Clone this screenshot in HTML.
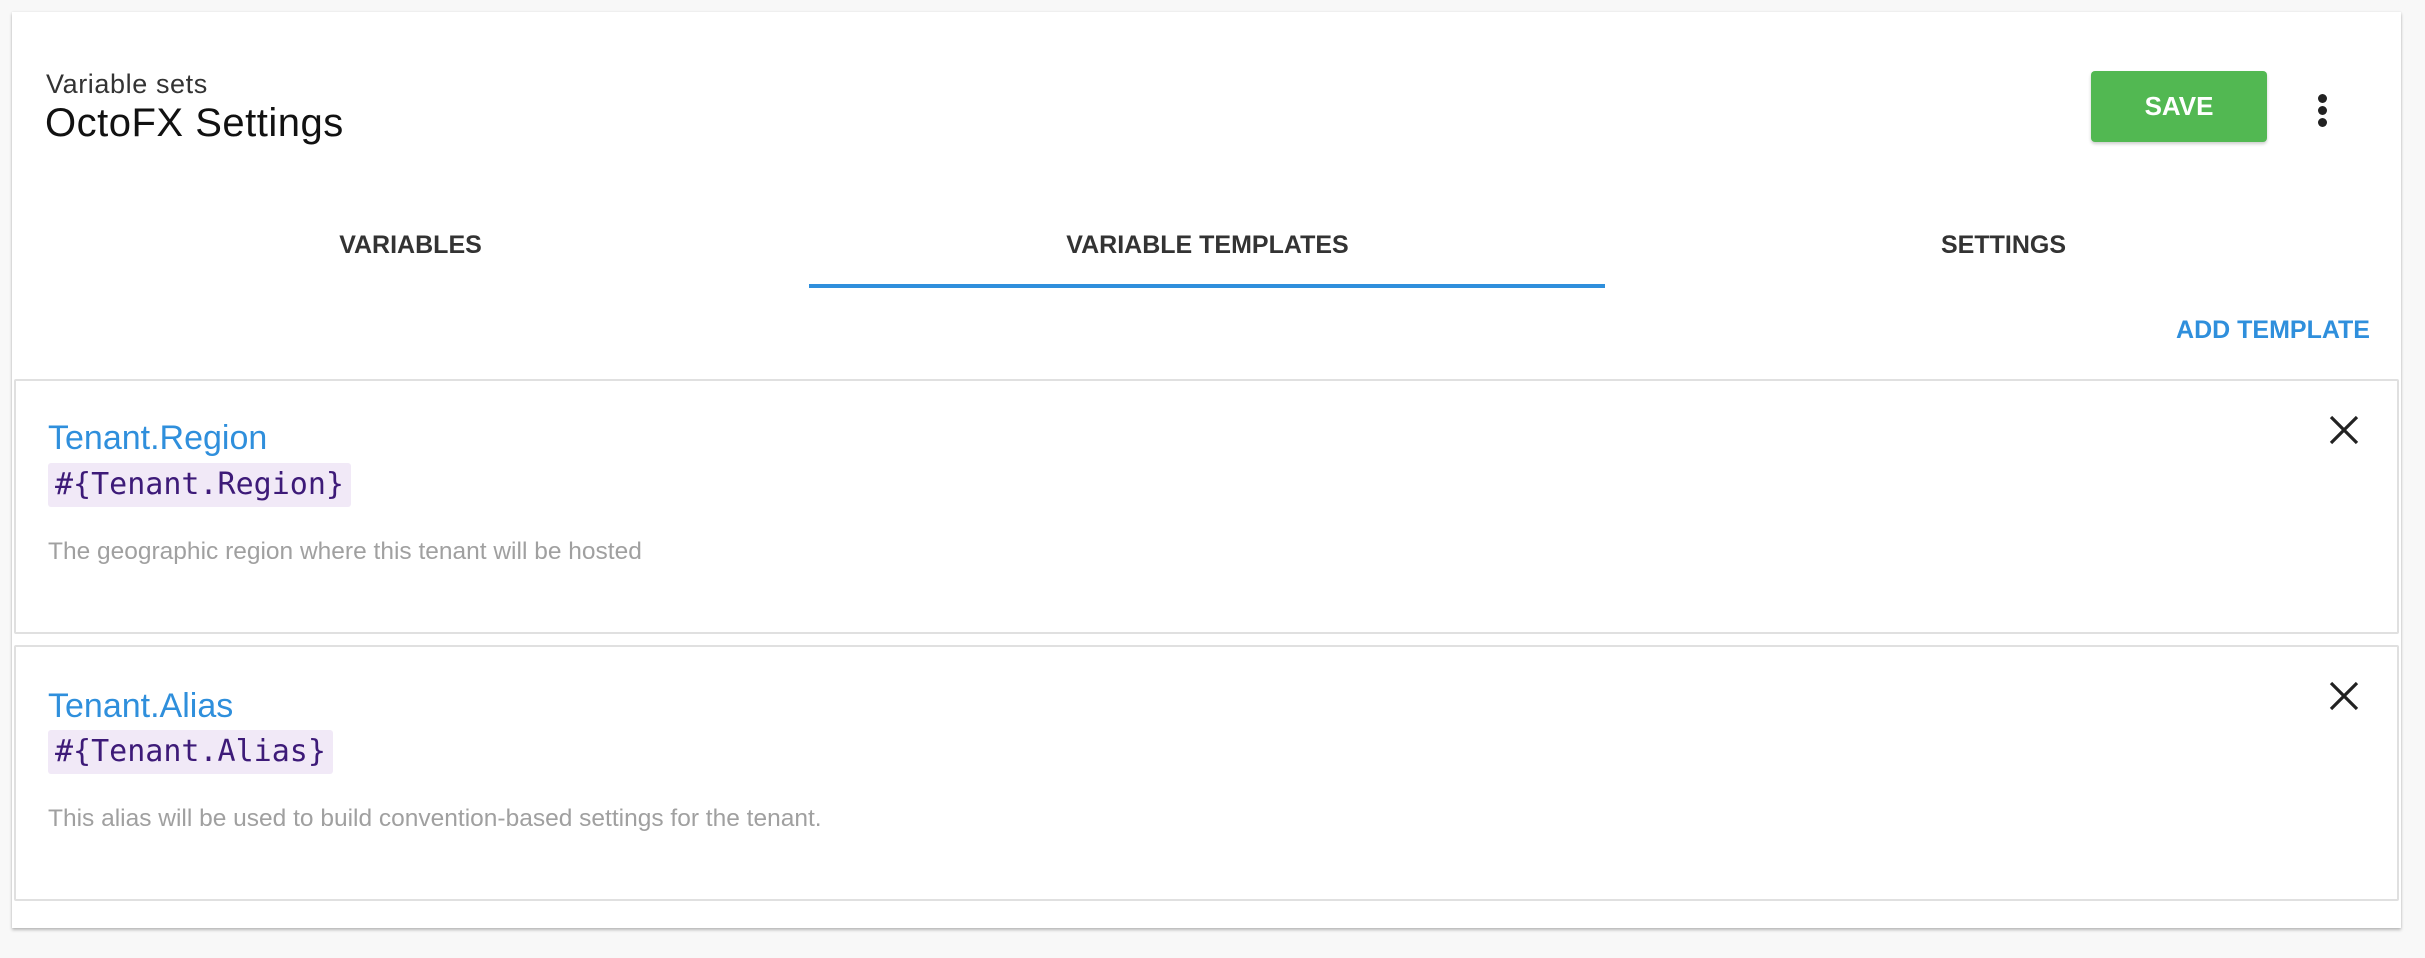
<!DOCTYPE html>
<html><head><meta charset="utf-8"><style>
*{box-sizing:border-box;margin:0;padding:0}
body{width:2425px;height:958px;background:#f8f8f8;font-family:"Liberation Sans",Arial,sans-serif;position:relative;overflow:hidden}
.card{position:absolute;left:12px;top:12px;width:2389px;height:916px;background:#fff;box-shadow:0 2px 3px rgba(0,0,0,.25),0 0 2px rgba(0,0,0,.08)}
.abs{position:absolute;white-space:nowrap}
.sub{left:34px;top:57px;font-size:27px;color:#333;letter-spacing:0.6px}
.title{left:33px;top:89px;font-size:40px;color:#111;letter-spacing:0.5px}
.save{left:2079px;top:59px;width:176px;height:71px;background:#52b852;border-radius:4px;color:#fff;font-weight:bold;font-size:26px;text-align:center;line-height:71px;box-shadow:0 2px 3px rgba(0,0,0,.2)}
.dot{position:absolute;width:9px;height:9px;border-radius:50%;background:#222;left:2306px}
.tab{font-size:25px;font-weight:bold;color:#333;text-align:center;width:797px;top:219px}
.ul{left:797px;top:272px;width:796px;height:4px;background:#2f8fdc}
.add{right:31px;top:304px;font-size:25px;font-weight:bold;color:#2f8fdc}
.item{position:absolute;left:2px;width:2385px;background:#fff;border:2px solid #e0e0e0;border-radius:2px}
.name{left:32px;font-size:34px;color:#2f8fdc}
.code{left:32px;height:44px;background:#f1e9f7;border-radius:3px;font-family:"DejaVu Sans Mono","Liberation Mono",monospace;font-size:30px;color:#3d1a78;line-height:44px;padding:0 7px}
.desc{left:32px;font-size:24.5px;color:#a0a0a0}
.x{position:absolute;right:38px}
</style></head><body>
<div class="card">
<div class="abs sub">Variable sets</div>
<div class="abs title">OctoFX Settings</div>
<div class="abs save">SAVE</div>
<div class="dot" style="top:82px"></div><div class="dot" style="top:94px"></div><div class="dot" style="top:106px"></div>
<div class="abs tab" style="left:0">VARIABLES</div>
<div class="abs tab" style="left:797px">VARIABLE TEMPLATES</div>
<div class="abs tab" style="left:1593px">SETTINGS</div>
<div class="abs ul"></div>
<div class="abs add">ADD TEMPLATE</div>

<div class="item" style="top:367px;height:255px">
<div class="abs name" style="top:38px">Tenant.Region</div>
<div class="abs code" style="top:82px">#{Tenant.Region}</div>
<div class="abs desc" style="top:157px">The geographic region where this tenant will be hosted</div>
<svg class="x" style="top:34px" width="30" height="30" viewBox="0 0 30 30"><path d="M2 2L28 28M28 2L2 28" stroke="#222" stroke-width="3.2"/></svg>
</div>

<div class="item" style="top:633px;height:256px">
<div class="abs name" style="top:40px">Tenant.Alias</div>
<div class="abs code" style="top:83px">#{Tenant.Alias}</div>
<div class="abs desc" style="top:158px">This alias will be used to build convention-based settings for the tenant.</div>
<svg class="x" style="top:34px" width="30" height="30" viewBox="0 0 30 30"><path d="M2 2L28 28M28 2L2 28" stroke="#222" stroke-width="3.2"/></svg>
</div>
</div>
</body></html>
